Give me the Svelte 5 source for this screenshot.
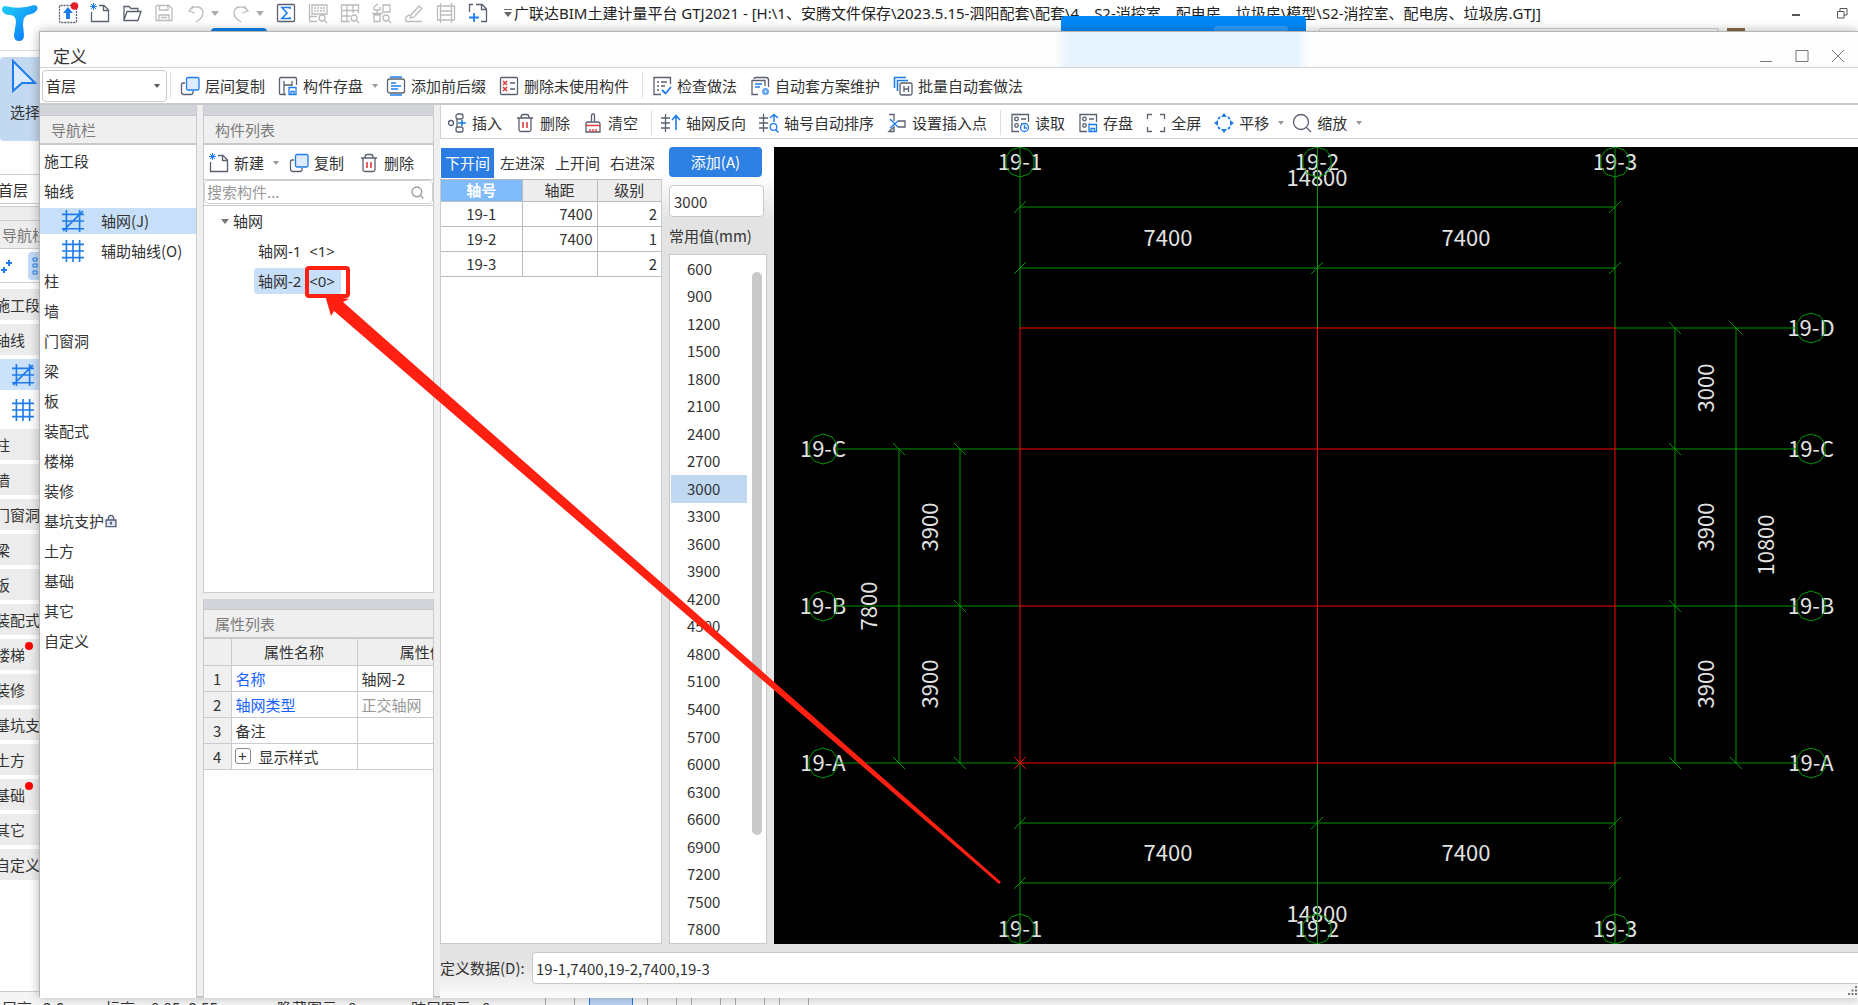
<script>
  const quickIcons = ['update', 'new', 'open', 'save', 'undo', 'redo', 'sigma', 'findLabel', 'findTable', 'findPart', 'edit', 'film', 'addPage'];

  const mainNav = [
    { text: '施工段' },
    { text: '轴线' },
    { icon: 'axisGrid', active: true },
    { icon: 'axisAux' },
    { text: '柱' },
    { text: '墙' },
    { text: '门窗洞' },
    { text: '梁' },
    { text: '板' },
    { text: '装配式' },
    { text: '楼梯', dot: true },
    { text: '装修' },
    { text: '基坑支护' },
    { text: '土方' },
    { text: '基础', dot: true },
    { text: '其它' },
    { text: '自定义' }
  ];

  const navItems = [
    { text: '施工段' },
    { text: '轴线' },
    { text: '轴网(J)', icon: 'axisGrid' },
    { text: '辅助轴线(O)', icon: 'axisAux' },
    { text: '柱' },
    { text: '墙' },
    { text: '门窗洞' },
    { text: '梁' },
    { text: '板' },
    { text: '装配式' },
    { text: '楼梯' },
    { text: '装修' },
    { text: '基坑支护', lock: true },
    { text: '土方' },
    { text: '基础' },
    { text: '其它' },
    { text: '自定义' }
  ];

  const defineTools = [
    { icon: 'copyLayer', text: '层间复制' },
    { icon: 'store', text: '构件存盘', caret: true },
    { icon: 'affix', text: '添加前后缀' },
    { icon: 'removeUnused', text: '删除未使用构件' },
    { divider: true },
    { icon: 'check', text: '检查做法' },
    { icon: 'scheme', text: '自动套方案维护' },
    { icon: 'batch', text: '批量自动套做法' }
  ];

  const componentTools = [
    { icon: 'new', text: '新建', caret: true },
    { icon: 'copy', text: '复制' },
    { icon: 'trash', text: '删除' }
  ];

  const axisTools = [
    { icon: 'insert', text: '插入' },
    { icon: 'trash', text: '删除' },
    { icon: 'broom', text: '清空' },
    { divider: true },
    { icon: 'reverse', text: '轴网反向' },
    { icon: 'sort', text: '轴号自动排序' },
    { icon: 'insertPoint', text: '设置插入点' },
    { divider: true },
    { icon: 'read', text: '读取' },
    { icon: 'saveList', text: '存盘' },
    { icon: 'full', text: '全屏' },
    { icon: 'pan', text: '平移', caret: true },
    { icon: 'zoom', text: '缩放', caret: true }
  ];

  const tabs = ['下开间', '左进深', '上开间', '右进深'];
  const axisRows = [
    { id: '19-1', span: '7400', level: 2 },
    { id: '19-2', span: '7400', level: 1 },
    { id: '19-3', span: '', level: 2 }
  ];
  const commonValues = Array.from({ length: 25 }, (_, i) => 600 + i * 300);

  // drawing geometry, in canvas units
  const axisX = [246, 543, 841];
  const axisY = { D: 181, C: 302, B: 459, A: 616 };
  const topDims = [60, 121];
  const bottomDims = [676, 736];
  const leftDims = [125, 186];
  const rightDims = [901, 962];

  const hTicks = [
    [246, 60], [841, 60], [246, 121], [543, 121], [841, 121],
    [246, 676], [543, 676], [841, 676], [246, 736], [841, 736]
  ];
  const vTicks = [
    [125, 302], [186, 302], [186, 459], [125, 616], [186, 616],
    [901, 181], [962, 181], [901, 302], [901, 459], [901, 616], [962, 616]
  ];
  const bubbles = [
    ...axisX.flatMap((x, i) => [[x, 15, `19-${i + 1}`], [x, 782, `19-${i + 1}`]]),
    ...['C', 'B', 'A'].map((k) => [49, axisY[k], `19-${k}`]),
    ...['D', 'C', 'B', 'A'].map((k) => [1037, axisY[k], `19-${k}`])
  ];
  const dimTexts = [
    [394, 91, '7400'], [692, 91, '7400'], [543, 31, '14800'],
    [394, 706, '7400'], [692, 706, '7400'], [543, 767, '14800']
  ];
  const sideTexts = [
    [95, 459, '7800'], [156, 380, '3900'], [156, 537, '3900'],
    [932, 241, '3000'], [932, 380, '3900'], [932, 537, '3900'], [992, 398, '10800']
  ];

  let activeTab = $state('下开间');
  let activeNav = $state('轴网(J)');
  let distance = $state('3000');
  let floor = $state('首层');
  let keyword = $state('');
  let definition = $state('19-1,7400,19-2,7400,19-3');

  function ring(cx, cy) {
    return Array.from({ length: 10 }, (_, i) => {
      const a = (i * Math.PI) / 5 - Math.PI / 2;
      return `${Math.round(cx + 15 * Math.cos(a))},${Math.round(cy + 15 * Math.sin(a))}`;
    }).join(' ');
  }
</script>

{#snippet icon(name)}
  <svg class="icon" viewBox="0 0 20 20" aria-hidden="true">
    {#if name === 'update'}
      <rect x="1.500" y="2.500" width="17" height="17" rx="1" stroke-dasharray="2 1" />
      <path class="bf" d="M10 4 L15 10 H12 V16 H8 V10 H5 Z" />
      <circle class="rf" cx="16.500" cy="3" r="3.800" />
    {:else if name === 'new'}
      <path d="M9 2.500 H14 L18.500 7 V18.500 H1.500 V9 M13.500 2.500 V7.500 H18.500" />
      <path class="b" d="M1 1 L6 6 M6 1 L1 6 M3.500 0 V7 M0 3.500 H7" stroke-width="1" />
    {:else if name === 'open'}
      <path d="M2 17 V3.500 H7 L9 5.500 H16 V8 M2 17 L5 8.500 H19 L16 17.500 H2 Z" />
    {:else if name === 'save'}
      <path class="g" d="M2 4 Q2 2.500 3.500 2.500 H15 L18 5.500 V17.500 H2 Z M5.500 2.500 V7 H14 V2.500 M5 17 V12 H15 V17 M7 14.500 H13" />
    {:else if name === 'undo'}
      <path class="g" d="M7 3 L3 8 L9 10 M3 8 Q7 3 12 4 Q17 5 17 10 Q17 15 10 19" />
    {:else if name === 'redo'}
      <path class="g" d="M13 3 L17 8 L11 10 M17 8 Q13 3 8 4 Q3 5 3 10 Q3 15 10 19" />
    {:else if name === 'sigma'}
      <rect x="1.500" y="1.500" width="17" height="17" rx="1" />
      <path class="b" d="M14 6 V4.500 H6 L11 10 L6 15.500 H14 V14" stroke-width="1.600" />
    {:else if name === 'findLabel'}
      <path class="g" d="M1.500 1 V18.500 M1.500 13.500 H9 M1.500 18.500 H9 M4 2 H19 V11 H4 Z" />
      <path class="g" d="M6 5 H17 M6 8 H17" stroke-dasharray="2 1" />
      <circle class="g" cx="14" cy="15" r="3" /><path class="g" d="M16 17 L19 20" />
    {:else if name === 'findTable'}
      <path class="g" d="M10 18.500 H1.500 V2 H18.500 V10 M1.500 7.500 H18.500 M1.500 13 H10 M7 2 V18 M13 2 V10" />
      <circle class="g" cx="14" cy="15" r="3" /><path class="g" d="M16 17 L19 20" />
    {:else if name === 'findPart'}
      <path class="g" d="M6 1 L2 4 V7 H8 V4 M11 2 H18 V9 H11 Z M2 12 H8 V18.500 H2 Z M0 10.500 H11 M5 7 V12" />
      <circle class="g" cx="14" cy="15" r="3" /><path class="g" d="M16 17 L19 20" />
    {:else if name === 'edit'}
      <path class="g" d="M7 12 L15 3 L18 5.500 L10 14 L6 15 Z M6 12 Q0 13 2 18.500 H18" />
    {:else if name === 'film'}
      <path class="g" d="M4.500 0 V20 M15.500 0 V20 M1 3 H19 M1 17 H19 M4.500 8 H15.500 M4.500 12 H15.500 M1.500 3 V17 M18.500 3 V17" />
    {:else if name === 'addPage'}
      <path d="M5 1.500 H1.500 V9 M8 1.500 H14 L18.500 6 V18.500 H13 M13.500 1.500 V6.500 H18.500" />
      <path class="b" d="M6 10 V19 M1 14.500 H11" stroke-width="1.800" />
    {:else if name === 'copyLayer' || name === 'copy'}
      <path d="M5 7 H3 Q1.500 7 1.500 9 V16 Q1.500 18.500 4 18.500 H11 Q13 18.500 13 16 V15" />
      <rect class="b" x="6.500" y="1.500" width="12.500" height="12.500" rx="1.500" fill="#dcebfd" />
    {:else if name === 'store'}
      <path d="M8 18.500 H3 Q1.500 18.500 1.500 17 V3 Q1.500 1.500 3 1.500 H17 Q18.500 1.500 18.500 3 V9 M6 5 V18 M6 9 H14 M14 5 V10" />
      <path class="b" d="M11 11.500 H18 V18.500 H11 Z M13 18 V15.500 H16 V18" />
    {:else if name === 'affix'}
      <rect x="1.500" y="3" width="17" height="14" rx="2" />
      <path class="b" d="M4 1 H16 M4 19 H16 M5 7 H10 M5 10 H15 M5 13 H12" stroke-width="1.600" />
    {:else if name === 'removeUnused'}
      <rect x="1.500" y="1.500" width="17" height="17" rx="1" />
      <path class="r" d="M4 5 L8 9 M8 5 L4 9 M4 11 L8 15 M8 11 L4 15" stroke-width="1.600" />
      <path d="M11 7 H16 M11 13 H16" />
    {:else if name === 'check'}
      <path d="M9 18.500 H2 V1.500 H18.500 V8 M5 6 H7 M9 6 H15 M5 10 H7 M9 10 H13 M5 14 H7" />
      <path class="b" d="M10 14 L13.500 17.500 L19 11" stroke-width="1.800" />
    {:else if name === 'scheme'}
      <path d="M4 3 Q4 1.500 6 1.500 H16 Q18.500 1.500 18.500 4 V11 M8 18.500 H2 V4.500 H15 V10" />
      <path class="b" d="M5 8 H12 M5 11 H10" stroke-width="1.600" />
      <circle class="bf" cx="15.500" cy="15.500" r="3.500" opacity="0.700" />
      <circle cx="15.500" cy="15.500" r="1" fill="#fff" stroke="none" />
    {:else if name === 'batch'}
      <path class="b" d="M1.500 12 V1.500 H13 M4.500 15 V4.500 H15" stroke-width="1.600" />
      <rect x="7" y="7" width="12" height="12" rx="1.500" />
      <path d="M11 10 V16 M15.500 10 V16 M11 13 H15" />
    {:else if name === 'trash'}
      <path d="M2 5 H18 M6 5 Q6 1.500 8 1.500 H12 Q14 1.500 14 5 M4 5 V17 Q4 18.500 6 18.500 H14 Q16 18.500 16 17 V5" />
      <path class="r" d="M8 9 V15 M12 9 V15" stroke-width="1.600" />
    {:else if name === 'insert'}
      <circle cx="4" cy="10" r="2.500" />
      <rect x="9" y="1" width="7" height="5" rx="2" /><rect x="9" y="14" width="7" height="5" rx="2" />
      <path d="M10 6 V14" /><path class="b" d="M11 10 H19 M15 7 V13" stroke-width="1.600" />
    {:else if name === 'broom'}
      <path d="M8.500 9 V2 Q10 0 11.500 2 V9 M3 19 V11 Q3 9 5 9 H15 Q17 9 17 11 V19 Z" />
      <path class="r" d="M3 12.500 H17 M7 19 V16 M10 19 V16 M13 19 V16" stroke-width="1.400" />
    {:else if name === 'reverse' || name === 'sort'}
      <path d="M4.500 1 V19 M0 5 H9 M0 10 H9 M0 15 H9" />
      {#if name === 'reverse'}
        <path class="b" d="M15 17 V3 M11 7 L15 2.500 L19 7" stroke-width="1.600" />
      {:else}
        <path class="b" d="M15 9 V2 M11 5 L15 1.500 L19 5 M17 17 L19.500 19.500" stroke-width="1.500" />
        <circle class="b" cx="14.500" cy="14" r="3.300" />
      {/if}
    {:else if name === 'insertPoint'}
      <path d="M2 1.500 H7 V8 M7 14 V18.500 H2 Z M11 8 H18 V14 H11" />
      <path class="b" d="M3 6 L11 14 M11 8 L3 15" />
    {:else if name === 'read' || name === 'saveList'}
      <path d="M9 18.500 H2 V1.500 H18.500 V9 M11 6 H16 M11 11 H12" />
      <circle cx="6.500" cy="6" r="1.800" /><circle cx="6.500" cy="12.500" r="1.800" />
      {#if name === 'read'}
        <circle class="b" cx="14.500" cy="14.500" r="4" /><path class="b" d="M14.500 12 V15 H17" />
      {:else}
        <path class="b" d="M11 11.500 H18.500 V18.500 H11 Z M13 18 V15.500 H16.500 V18" />
      {/if}
    {:else if name === 'full'}
      <path d="M1.500 6 V1.500 H6 M14 1.500 H18.500 V6 M18.500 14 V18.500 H14 M6 18.500 H1.500 V14" />
    {:else if name === 'pan'}
      <path class="bf" d="M10 0 L13 4 H7 Z M10 20 L13 16 H7 Z M0 10 L4 7 V13 Z M20 10 L16 7 V13 Z" />
      <path class="b" d="M4 6 L6 4 M14 4 L16 6 M16 14 L14 16 M6 16 L4 14" stroke-width="1.800" />
    {:else if name === 'zoom'}
      <circle cx="9" cy="9" r="7.500" /><path d="M14.500 14.500 L19 19" />
    {:else if name === 'axisGrid'}
      <path class="b" d="M4 0 V20 M16 0 V20 M0 4 H20 M0 10 H20 M0 17 H20 M1 19 L19 1" stroke-width="1.500" />
    {:else if name === 'axisAux'}
      <path class="b" d="M4 0 V20 M10 0 V20 M16 0 V20 M0 4 H20 M0 10 H20 M0 16 H20" stroke-width="1.500" />
    {:else if name === 'lock'}
      <path d="M3 8.500 H17 V18 H3 Z M6 8.500 Q6 2 10 2 Q14 2 14 8.500" fill="#dfe8fb" stroke-width="2" />
      <path d="M10 11 V15" stroke-width="3" />
    {/if}
  </svg>
{/snippet}

{#snippet tools(items)}
  {#each items as item}
    {#if item.divider}
      <span class="divider"></span>
    {:else}
      <button class="tool" class:with-caret={item.caret}>
        {@render icon(item.icon)}
        <span>{item.text}</span>
        {#if item.caret}<i class="caret"></i>{/if}
      </button>
    {/if}
  {/each}
{/snippet}

<div class="desktop">
  <!-- main window behind the dialog -->
  <div class="main">
    <header class="main-title">
      <svg class="logo" viewBox="0 0 36 36" aria-hidden="true">
        <defs>
          <linearGradient id="logo" x1="0" y1="0" x2="1" y2="1">
            <stop offset="0" stop-color="#1fd0f5" />
            <stop offset="1" stop-color="#0a6cff" />
          </linearGradient>
        </defs>
        <path d="M3 1 Q18 5 32 0 Q37 1 35 5 Q33 9 25 10 Q21 12 21 20 L22 30 Q22 36 17 36 Q12 36 12 30 L14 17 Q14 11 9 10 Q1 10 0 5 Q0 1 3 1 Z" fill="url(#logo)" />
      </svg>
      <div class="quick">
        {#each quickIcons as name}
          <button class="quick-btn" aria-label={name}>{@render icon(name)}</button>
          {#if name === 'undo' || name === 'redo'}<i class="caret quick-caret"></i>{/if}
        {/each}
        <svg class="more" viewBox="0 0 8 10" aria-hidden="true"><path d="M0 1 H8 V2 H0 Z M0 4 H8 L4 9 Z" /></svg>
      </div>
      <h1>广联达BIM土建计量平台 GTJ2021 - [H:\1、安腾文件保存\2023.5.15-泗阳配套\配套\4、S2-消控室、配电房、垃圾房\模型\S2-消控室、配电房、垃圾房.GTJ]</h1>
      <div class="main-controls">
        <button aria-label="最小化"><svg viewBox="0 0 12 12"><path d="M2 8 H10" stroke-width="2" /></svg></button>
        <button aria-label="还原"><svg viewBox="0 0 12 12"><path d="M1.500 4.500 H8 V11 H1.500 Z M4 4 V1.500 H11 V8 H8" /></svg></button>
      </div>
    </header>

    <div class="peek">
      <span class="peek-pill"></span>
      <span class="peek-tab"><i></i></span>
      <span class="peek-search"></span>
      <span class="peek-avatar"></span>
    </div>

    <aside class="main-side">
      <button class="select-tool">
        <svg viewBox="0 0 26 34" aria-hidden="true"><path d="M2 2 L24 24 L11 24 L2 32 Z" /></svg>
        <span>选择</span>
      </button>
      <div class="main-floor">首层</div>
      <div class="main-dock"></div>
      <div class="main-head">导航栏</div>
      <div class="main-mode">
        <svg viewBox="0 0 12 14" aria-hidden="true"><path d="M4 8 V14 M1 11 H7 M9 1 V7 M6 4 H12" /></svg>
        <button class="mode" aria-label="列表">
          <svg viewBox="0 0 8 20" aria-hidden="true"><path d="M2 2 H6 V5 H2 Z M2 8 H6 V11 H2 Z M2 15 H6 V18 H2 Z" /></svg>
        </button>
      </div>
      <ul class="main-nav">
        {#each mainNav as item}
          <li class:icon-row={item.icon} class:active={item.active}>
            {#if item.icon}{@render icon(item.icon)}{:else}{item.text}{/if}
            {#if item.dot}<i class="dot"></i>{/if}
          </li>
        {/each}
      </ul>
    </aside>

    <footer class="status">
      <span class="st">层高:&nbsp; 3.6</span>
      <span class="st wide">标高:&nbsp; -0.05~3.55</span>
      <span class="st">隐藏图元:&nbsp; 0</span>
      <span class="st">跨层图元:&nbsp; 0</span>
      <span class="snap"></span><span class="snap on"></span><span class="snap"></span><span class="snap"></span><span class="snap"></span><span class="snap"></span>
    </footer>
  </div>

  <!-- definition dialog -->
  <section class="dialog">
    <header class="dialog-title">
      <h2>定义</h2>
      <div class="controls">
        <button aria-label="最小化"><svg viewBox="0 0 14 14"><path d="M1 12.500 H13" /></svg></button>
        <button aria-label="最大化"><svg viewBox="0 0 14 14"><path d="M1 1.500 H13 V12.500 H1 Z" /></svg></button>
        <button aria-label="关闭"><svg viewBox="0 0 14 14"><path d="M1 1 L13 13 M13 1 L1 13" /></svg></button>
      </div>
    </header>

    <div class="toolbar define-bar">
      <div class="floor">
        <select bind:value={floor} aria-label="楼层">
          <option>首层</option>
        </select>
        <i class="caret dark"></i>
      </div>
      <span class="divider first"></span>
      {@render tools(defineTools)}
    </div>

    <div class="body">
      <div class="panel">
        <div class="dock"></div>
        <h3>导航栏</h3>
        <nav class="nav">
          {#each navItems as item}
            <button
              class="nav-item"
              class:sub={item.icon}
              class:active={activeNav === item.text}
              onclick={() => (activeNav = item.text)}
            >
              {#if item.icon}{@render icon(item.icon)}{/if}
              <span>{item.text}</span>
              {#if item.lock}{@render icon('lock')}{/if}
            </button>
          {/each}
        </nav>
      </div>

      <div class="column">
        <div class="panel list-panel">
          <div class="dock"></div>
          <h3>构件列表</h3>
          <div class="component-bar">{@render tools(componentTools)}</div>
          <label class="search">
            <input type="text" placeholder="搜索构件..." bind:value={keyword} />
            {@render icon('zoom')}
          </label>
          <ul class="tree">
            <li><i class="caret open"></i>轴网</li>
            <li class="leaf"><span>轴网-1&nbsp; &lt;1&gt;</span></li>
            <li class="leaf"><span class="picked">轴网-2&nbsp; &lt;0&gt;</span></li>
          </ul>
        </div>

        <div class="panel props-panel">
          <div class="dock"></div>
          <h3>属性列表</h3>
          <table class="props">
            <thead>
              <tr><th class="num"></th><th class="name">属性名称</th><th class="value">属性值</th></tr>
            </thead>
            <tbody>
              <tr><th class="num">1</th><td class="key">名称</td><td>轴网-2</td></tr>
              <tr><th class="num">2</th><td class="key">轴网类型</td><td class="muted">正交轴网</td></tr>
              <tr><th class="num">3</th><td>备注</td><td></td></tr>
              <tr><th class="num">4</th><td class="group"><button class="expand" aria-label="展开">+</button>显示样式</td><td></td></tr>
            </tbody>
          </table>
        </div>
      </div>

      <div class="work">
        <div class="toolbar axis-bar">{@render tools(axisTools)}</div>

        <div class="editor">
          <div class="axis-panel">
            <div class="tabs" role="tablist">
              {#each tabs as tab}
                <button role="tab" aria-selected={activeTab === tab} class:on={activeTab === tab} onclick={() => (activeTab = tab)}>{tab}</button>
              {/each}
            </div>
            <div class="sheet">
              <table class="axis-table">
                <thead>
                  <tr><th class="current">轴号</th><th>轴距</th><th>级别</th></tr>
                </thead>
                <tbody>
                  {#each axisRows as row}
                    <tr><td class="id">{row.id}</td><td>{row.span}</td><td>{row.level}</td></tr>
                  {/each}
                </tbody>
              </table>
            </div>
          </div>

          <div class="values">
            <button class="add">添加(A)</button>
            <input type="text" aria-label="轴距" bind:value={distance} />
            <p>常用值(mm)</p>
            <div class="value-list">
              <ul>
                {#each commonValues as v}
                  <li class:on={String(v) === distance}>{v}</li>
                {/each}
              </ul>
              <span class="thumb"></span>
            </div>
          </div>

          <svg class="canvas" viewBox="0 0 1084 797" role="img" aria-label="轴网预览">
            <g class="dim-text">
              {#each bubbles as [x, y, t]}<text {x} y={y + 8}>{t}</text>{/each}
              {#each dimTexts as [x, y, t]}<text {x} y={y + 8}>{t}</text>{/each}
              {#each sideTexts as [x, y, t]}<text transform="translate({x + 8} {y}) rotate(-90)">{t}</text>{/each}
            </g>
            <g class="green">
              {#each axisX as x}
                <path class:crisp={x === 543} d="M{x} 0 V181 M{x} 616 V797" />
              {/each}
              {#each [...topDims, ...bottomDims] as y}<path d="M246 {y} H841" />{/each}
              {#each ['C', 'B', 'A'] as k}<path d="M64 {axisY[k]} H246" />{/each}
              {#each ['D', 'C', 'B', 'A'] as k}<path d="M841 {axisY[k]} H1022" />{/each}
              {#each leftDims as x}<path d="M{x} 302 V616" />{/each}
              {#each rightDims as x}<path d="M{x} 181 V616" />{/each}
              {#each hTicks as [x, y]}<path d="M{x - 6} {y + 6} L{x + 6} {y - 6}" />{/each}
              {#each vTicks as [x, y]}<path d="M{x - 6} {y - 6} L{x + 6} {y + 6}" />{/each}
              {#each bubbles as [x, y]}<polygon points={ring(x, y)} />{/each}
            </g>
            <g class="red">
              {#each axisX as x}<path class:crisp={x === 543} d="M{x} 181 V616" />{/each}
              {#each Object.values(axisY) as y}<path d="M246 {y} H841" />{/each}
              <path d="M240 610 L252 622 M252 610 L240 622" />
            </g>
          </svg>
        </div>

        <div class="definition">
          <label for="definition">定义数据(D):</label>
          <input id="definition" type="text" bind:value={definition} />
        </div>
        <svg class="grip" viewBox="0 0 9 9" aria-hidden="true">
          <path d="M7 0 H9 V2 H7 Z M7 3.500 H9 V5.500 H7 Z M7 7 H9 V9 H7 Z M3.500 3.500 H5.500 V5.500 H3.500 Z M3.500 7 H5.500 V9 H3.500 Z M0 7 H2 V9 H0 Z" />
        </svg>
      </div>
    </div>
  </section>

  <!-- callout drawn over both windows -->
  <svg class="callout" aria-hidden="true">
    <rect x="307" y="268" width="41" height="28" rx="2" />
    <polygon points="325,295 349,299 343,302 1001,882 999,884 334,311 331,316" />
  </svg>
</div>

<style>
  :global(body) {
    margin: 0;
    background: #fff;
  }

  .desktop {
    position: relative;
    height: 100vh;
    min-height: 700px;
    overflow: hidden;
    font-family: 'Noto Sans CJK SC', 'Noto Sans', sans-serif;
    font-size: 15px;
    line-height: 20px;
    color: #333;
  }

  h1, h2, h3, p, ul {
    margin: 0;
    padding: 0;
    font-size: 15px;
    font-weight: 400;
    list-style: none;
  }

  button, input, select {
    font: inherit;
    color: inherit;
    margin: 0;
    padding: 0;
    border: 0;
    background: none;
    box-sizing: border-box;
  }

  svg {
    display: block;
    flex: none;
  }

  .icon {
    width: 20px;
    height: 20px;
    overflow: visible;
    fill: none;
    stroke: #596070;
    stroke-width: 1.3;
  }

  .icon .b { stroke: #1f7cec; }
  .icon .r { stroke: #e23b3b; }
  .icon .g { stroke: #bcbcbc; }
  .icon .bf { fill: #1f7cec; stroke: none; }
  .icon .rf { fill: #e3202a; stroke: none; }

  .caret {
    width: 0;
    height: 0;
    flex: none;
    border: 4px solid transparent;
    border-top: 5px solid #999;
    border-bottom: 0;
  }

  .caret.dark { border-top-color: #555; }

  /* main window */
  .main {
    display: flex;
    flex-direction: column;
    height: calc(100% + 17px);
  }

  .main-title {
    display: flex;
    align-items: center;
    height: 26px;
    padding: 0 10px 0 2px;
  }

  .logo {
    width: 36px;
    height: 36px;
    align-self: flex-start;
    margin-top: 5px;
  }

  .quick {
    display: flex;
    align-items: center;
    gap: 12px;
    margin: 0 2px 0 20px;
  }

  .quick-caret {
    margin-left: -7px;
    border-top-color: #aaa;
  }

  .more {
    width: 8px;
    height: 10px;
    margin-left: 4px;
    fill: #666;
  }

  h1 {
    flex: 1;
    min-width: 0;
    white-space: nowrap;
    overflow: hidden;
    font-family: 'Noto Sans', 'Noto Sans CJK SC', sans-serif;
    color: #222;
  }

  .main-controls {
    display: flex;
    gap: 34px;
  }

  .main-controls svg {
    width: 12px;
    height: 12px;
    fill: none;
    stroke: #555;
  }

  .peek {
    position: absolute;
    top: 16px;
    left: 0;
    right: 0;
    height: 16px;
    display: flex;
    align-items: flex-end;
    padding-left: 211px;
  }

  .peek-pill {
    width: 56px;
    height: 4px;
    border-radius: 4px 4px 0 0;
    background: #0d83ec;
    margin-right: 794px;
  }

  .peek-tab {
    display: flex;
    align-items: flex-end;
    justify-content: flex-end;
    width: 245px;
    height: 16px;
    border-radius: 4px 4px 0 0;
    background: #0089f7;
    margin-right: 13px;
  }

  .peek-tab i {
    width: 74px;
    height: 6px;
    margin-right: 18px;
    border-radius: 3px 3px 0 0;
    background: #2d9df9;
  }

  .peek-search {
    width: 398px;
    height: 3px;
    border: 1px solid #d0d0d0;
    border-bottom: 0;
    border-radius: 3px 3px 0 0;
    margin-right: 8px;
  }

  .peek-avatar {
    width: 18px;
    height: 4px;
    background: #8a6a45;
  }

  .main-side {
    flex: 1;
    width: 60px;
    margin-top: 24px;
    border-top: 1px solid #ddd;
    padding-top: 6px;
  }

  .select-tool {
    display: flex;
    flex-direction: column;
    align-items: flex-start;
    width: 100%;
    height: 84px;
    padding: 2px 0 0 10px;
    background: #c3d9f1;
    border-radius: 4px 0 0 4px;
  }

  .select-tool svg {
    width: 28px;
    height: 34px;
    margin-bottom: 9px;
    fill: #dceafd;
    stroke: #1f7cec;
    stroke-width: 2;
  }

  .main-floor {
    margin: 33px 0 2px -2px;
    height: 28px;
    line-height: 30px;
    border: 1px solid #ccc;
    border-left: 0;
  }

  .main-dock {
    height: 15px;
    background: #ededed;
    border: 1px solid #ccc;
    border-left: 0;
    box-sizing: border-box;
  }

  .main-head {
    height: 28px;
    line-height: 28px;
    padding-left: 2px;
    border-bottom: 1px solid #ccc;
    background: #ededed;
    color: #777;
    box-sizing: border-box;
  }

  .main-mode {
    display: flex;
    align-items: center;
    gap: 16px;
    height: 33px;
    border-bottom: 1px solid #ccc;
    margin-bottom: 6px;
  }

  .main-mode svg {
    width: 12px;
    height: 14px;
    fill: none;
    stroke: #1f7cec;
    stroke-width: 2;
  }

  .main-mode .mode {
    width: 32px;
    height: 28px;
    padding-left: 3px;
    background: #c3dbf7;
    border-radius: 4px;
  }

  .main-mode .mode svg {
    width: 8px;
    height: 20px;
    stroke-width: 1;
  }

  .main-nav {
    display: flex;
    flex-direction: column;
    gap: 4px;
    margin-left: -5px;
  }

  .main-nav li {
    display: flex;
    align-items: center;
    height: 31px;
    background: #ececec;
    white-space: nowrap;
  }

  .main-nav .icon-row {
    background: #fff;
    padding-left: 17px;
  }

  .main-nav .icon {
    width: 22px;
    height: 22px;
  }

  .main-nav li.active { background: #cce2fb; }

  .dot {
    width: 8px;
    height: 8px;
    margin-bottom: 18px;
    border-radius: 50%;
    background: #f00;
  }

  .status {
    display: flex;
    align-items: center;
    height: 31px;
    border-top: 1px solid #ccc;
    background: #f5f5f5;
    box-sizing: border-box;
    padding: 1px 0 0 2px;
  }

  .st { width: 134px; }
  .st:first-child { width: 103px; }
  .st.wide { width: 172px; }

  .snap {
    width: 28px;
    height: 24px;
    margin-right: 14px;
    border: 1px solid #aaa;
  }

  .snap.on {
    width: 42px;
    background: #b9d3f2;
    border-color: #1f7cec;
  }

  /* dialog */
  .dialog {
    position: absolute;
    top: 31px;
    left: 39px;
    right: 0;
    bottom: 8px;
    display: flex;
    flex-direction: column;
    border: 1px solid #b5b5b5;
    border-right: 0;
    background: #fff;
    box-shadow: 0 0 10px rgba(0, 0, 0, 0.3);
    box-sizing: border-box;
  }

  .dialog-title {
    display: flex;
    align-items: center;
    justify-content: space-between;
    height: 35px;
    padding: 0 13px;
    border-bottom: 1px solid #d2d4d6;
    background: linear-gradient(90deg, transparent 1015px, #e6f3fd 1030px, #e6f3fd 1256px, transparent 1270px) #fdfdfd;
  }

  h2 {
    font-size: 17px;
    padding-top: 12px;
  }

  .controls {
    display: flex;
    gap: 22px;
    padding-top: 12px;
  }

  .controls svg {
    width: 14px;
    height: 14px;
    fill: none;
    stroke: #777;
  }

  .toolbar {
    display: flex;
    align-items: center;
    background: #fff;
    box-sizing: border-box;
  }

  .tool {
    display: flex;
    align-items: center;
    gap: 5px;
    margin-right: 13px;
    white-space: nowrap;
  }

  .tool.with-caret { margin-right: 8px; }
  .tool .caret { margin-left: 4px; border-width: 4px 3px 0; }

  .divider {
    width: 1px;
    height: 25px;
    margin-right: 9px;
    background: #ddd;
  }

  .define-bar {
    height: 37px;
    padding-left: 2px;
    border-bottom: 2px solid #c6cacd;
  }

  .define-bar .first { margin-left: 3px; }

  .floor {
    display: flex;
    align-items: center;
    width: 125px;
    height: 32px;
    border: 1px solid #c9c9c9;
    border-radius: 4px;
    box-sizing: border-box;
  }

  .floor select {
    flex: 1;
    height: 30px;
    padding-left: 3px;
    appearance: none;
    outline: none;
  }

  .floor .caret {
    margin-left: -13px;
    margin-right: 6px;
    pointer-events: none;
    border-width: 4px 3px 0;
  }

  .body {
    flex: 1;
    min-height: 0;
    display: grid;
    grid-template-columns: 157px 231px minmax(0, 1fr);
    gap: 6px;
    background: #efefef;
  }

  .panel {
    display: flex;
    flex-direction: column;
    min-height: 0;
    overflow: hidden;
    background: #fff;
    border-right: 1px solid #c8cbcf;
    box-sizing: border-box;
  }

  .dock {
    height: 11px;
    background: #d2d4da;
    border-bottom: 1px solid #c4c8cc;
    flex: none;
    box-sizing: border-box;
  }

  h3 {
    height: 29px;
    line-height: 28px;
    padding-left: 11px;
    color: #7b7b7b;
    background: #efefef;
    border-bottom: 2px solid #c6cacd;
    box-sizing: border-box;
    flex: none;
  }

  .nav {
    display: flex;
    flex-direction: column;
    gap: 4px;
    padding-top: 3px;
  }

  .nav-item {
    display: flex;
    align-items: center;
    height: 26px;
    padding-left: 4px;
    white-space: nowrap;
  }

  .nav-item.sub {
    gap: 17px;
    padding-left: 22px;
  }

  .nav-item.sub .icon {
    width: 22px;
    height: 22px;
  }

  .nav-item:not(.sub) .icon {
    width: 14px;
    height: 16px;
  }

  .nav-item.active { background: #c7dff9; }

  .column {
    display: flex;
    flex-direction: column;
    gap: 6px;
    min-height: 0;
  }

  .column .panel {
    border-left: 1px solid #c8cbcf;
  }

  .list-panel {
    flex: 486 1 0;
    border-bottom: 1px solid #c8cbcf;
  }

  .props-panel { flex: 399 1 0; }

  .component-bar {
    display: flex;
    align-items: center;
    gap: 2px;
    height: 35px;
    padding: 2px 0 0 5px;
    border-bottom: 1px solid #c8cbcf;
    box-sizing: border-box;
  }

  .search {
    display: flex;
    align-items: center;
    height: 24px;
    padding-right: 8px;
    border: 1px solid #d0d0d0;
    border-radius: 4px;
    box-sizing: border-box;
  }

  .search input {
    flex: 1;
    min-width: 0;
    padding-left: 2px;
    outline: none;
  }

  .search input::placeholder { color: #999; }

  .search .icon {
    width: 13px;
    height: 13px;
    stroke: #999;
    stroke-width: 2;
  }

  .tree {
    flex: 1;
    margin-top: 1px;
    border-top: 1px solid #c8cbcf;
    padding-left: 17px;
  }

  .tree li {
    display: flex;
    align-items: center;
    height: 30px;
  }

  .tree .caret { margin-right: 4px; border-top-color: #777; }
  .tree .leaf { padding-left: 33px; }

  .tree .leaf span {
    height: 26px;
    line-height: 26px;
    padding: 0 6px 0 4px;
    border-radius: 3px;
    font-family: 'Noto Sans', 'Noto Sans CJK SC', sans-serif;
    white-space: nowrap;
  }

  .tree .picked { background: #c7dff9; }

  .props {
    width: 284px;
    flex: none;
    table-layout: fixed;
    border-collapse: collapse;
  }

  .props th, .props td {
    height: 26px;
    padding: 0 0 0 4px;
    border-right: 1px solid #c8cbcf;
    border-bottom: 1px solid #c8cbcf;
    font-weight: 400;
    text-align: left;
    box-sizing: border-box;
    white-space: nowrap;
  }

  .props th {
    padding: 0;
    text-align: center;
    background: #efefef;
  }

  .props thead th { height: 27px; }
  .props .num { width: 27px; }
  .props .name { width: 126px; }
  .props .key { color: #1560ff; }
  .props .muted { color: #999; }
  .props .group { padding-left: 3px; }

  .expand {
    width: 16px;
    height: 16px;
    margin-right: 8px;
    line-height: 14px;
    vertical-align: 1px;
    border: 1px solid #888;
    border-radius: 3px;
  }

  .work {
    display: flex;
    flex-direction: column;
    min-width: 0;
    background: linear-gradient(180deg, #fff 0, #fff 70px, #e3e3e3 115px, #e4e4e4 860px, #fafafa 890px);
  }

  .axis-bar {
    height: 34px;
    padding: 2px 0 0 6px;
    border: 1px solid #d0d3d5;
    border-width: 0 0 1px 1px;
  }

  .editor {
    flex: 1;
    min-height: 0;
    display: grid;
    grid-template-columns: 222px 98px minmax(0, 1fr);
    column-gap: 7px;
    padding-top: 8px;
  }

  .axis-panel {
    display: flex;
    flex-direction: column;
    min-height: 0;
    padding-top: 1px;
  }

  .tabs {
    display: flex;
    height: 31px;
    gap: 2px;
    padding-left: 1px;
    background: #fff;
  }

  .tabs button {
    width: 53px;
    height: 30px;
    white-space: nowrap;
  }

  .tabs .on {
    background: #2b7de1;
    color: #fff;
  }

  .sheet {
    flex: 1;
    min-height: 0;
    background: #fff;
    border: 1px solid #c8cbcf;
    border-top-color: #bbb;
    box-sizing: border-box;
  }

  .axis-table {
    width: 100%;
    table-layout: fixed;
    border-collapse: collapse;
  }

  .axis-table th {
    height: 21px;
    padding: 0;
    font-weight: 400;
    background: #ededed;
    border: 1px solid #bbb;
    border-top: 0;
    border-left: 0;
    box-sizing: border-box;
  }

  .axis-table th:first-child { width: 81px; }
  .axis-table th:nth-child(2) { width: 75px; }
  .axis-table tr > :last-child { border-right: 0; }

  .axis-table th.current {
    background: #80bbfb;
    color: #fff;
    font-weight: 700;
  }

  .axis-table td {
    height: 25px;
    padding: 0 4px;
    text-align: right;
    border: 1px solid #bbb;
    border-left: 0;
    box-sizing: border-box;
  }

  .axis-table .id { text-align: center; }

  .values {
    display: flex;
    flex-direction: column;
    min-height: 0;
  }

  .add {
    width: 93px;
    height: 30px;
    margin-bottom: 8px;
    border-radius: 4px;
    background: #2d80e1;
    color: #fff;
  }

  .values input {
    width: 95px;
    height: 32px;
    padding-left: 4px;
    background: #fff;
    border: 1px solid #c8c8c8;
    border-radius: 4px;
    outline: none;
  }

  .values p {
    margin: 9px 0 8px;
    white-space: nowrap;
  }

  .value-list {
    flex: 1;
    min-height: 0;
    display: flex;
    justify-content: space-between;
    padding: 0 4px 0 1px;
    background: #fff;
    border: 1px solid #c8c8c8;
    box-sizing: border-box;
  }

  .value-list ul {
    display: flex;
    flex-direction: column;
    width: 76px;
  }

  .value-list li {
    flex: 1;
    min-height: 0;
    display: flex;
    align-items: center;
    padding-left: 16px;
  }

  .value-list .on { background: #c0d8f1; }

  .thumb {
    width: 10px;
    margin: 17px 0 108px;
    border-radius: 5px;
    background: #c9c9c9;
  }

  .canvas {
    width: 100%;
    height: 100%;
    min-height: 0;
    background: #000;
    fill: none;
  }

  .canvas text {
    font-size: 22px;
    text-anchor: middle;
    fill: #e2e2e2;
  }

  .green { stroke: #009400; }
  .red { stroke: #f00; }
  .crisp { shape-rendering: crispEdges; }

  .definition {
    display: flex;
    align-items: center;
    height: 32px;
    margin: 8px 0 2px;
  }

  .definition label {
    width: 92px;
    white-space: nowrap;
  }

  .definition input {
    flex: 1;
    min-width: 0;
    height: 32px;
    padding-left: 3px;
    background: #fff;
    border: 1px solid #c8c8c8;
    border-right: 0;
    border-radius: 4px 0 0 4px;
    outline: none;
  }

  .grip {
    width: 9px;
    height: 9px;
    margin: 0 1px 3px auto;
    fill: #777;
  }

  .callout {
    position: absolute;
    top: 0;
    left: 0;
    width: 100%;
    height: 100%;
    pointer-events: none;
  }

  .callout rect {
    fill: none;
    stroke: #ff2012;
    stroke-width: 4;
  }

  .callout polygon { fill: #ff2012; }
</style>
